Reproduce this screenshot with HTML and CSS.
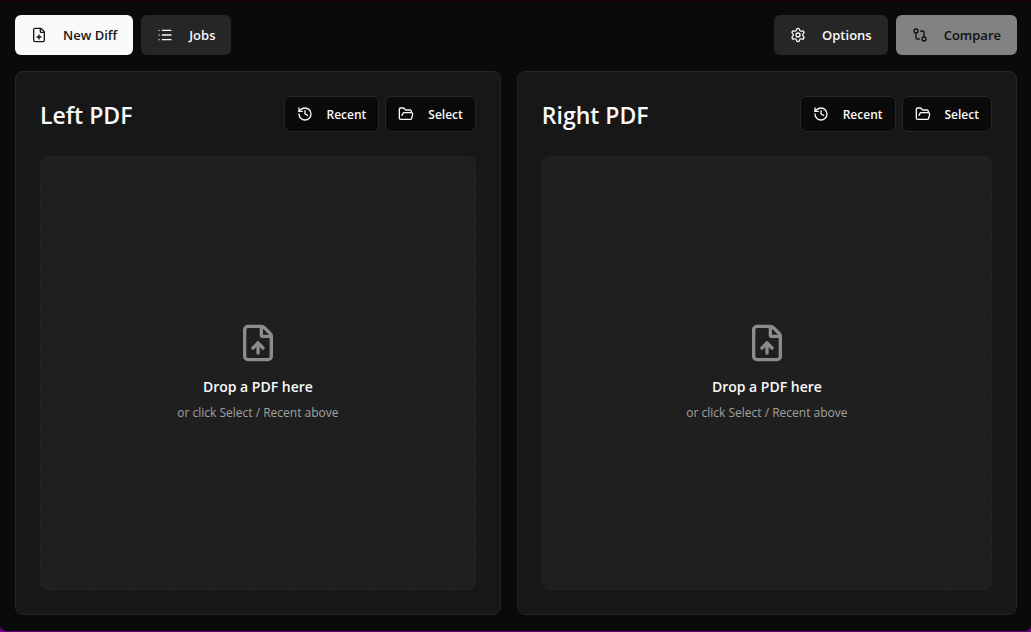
FILE: index.html
```html
<!DOCTYPE html>
<html lang="en">
<head>
<meta charset="UTF-8">
<meta name="viewport" content="width=device-width, initial-scale=1.0">
<title>PDF Diff</title>
<link rel="stylesheet" href="styles.css">
</head>
<body>

<div class="window">
    <header class="toolbar">
        <div class="toolbar-group">
            <button type="button" class="btn btn-primary">
                <svg class="icon" viewBox="0 0 24 24"><path d="M6 22a2 2 0 0 1-2-2V4a2 2 0 0 1 2-2h8a2.4 2.4 0 0 1 1.704.706l3.588 3.588A2.4 2.4 0 0 1 20 8v12a2 2 0 0 1-2 2z"/><path d="M14 2v5a1 1 0 0 0 1 1h5"/><path d="M9 15h6"/><path d="M12 18v-6"/></svg>
                New Diff
            </button>
            <button type="button" class="btn btn-secondary">
                <svg class="icon" viewBox="0 0 24 24"><path d="M3 5h.01"/><path d="M3 12h.01"/><path d="M3 19h.01"/><path d="M8 5h13"/><path d="M8 12h13"/><path d="M8 19h13"/></svg>
                Jobs
            </button>
        </div>
        <div class="toolbar-group">
            <button type="button" class="btn btn-secondary">
                <svg class="icon" viewBox="0 0 24 24"><path d="M9.671 4.136a2.34 2.34 0 0 1 4.659 0 2.34 2.34 0 0 0 3.319 1.915 2.34 2.34 0 0 1 2.33 4.033 2.34 2.34 0 0 0 0 3.831 2.34 2.34 0 0 1-2.33 4.033 2.34 2.34 0 0 0-3.319 1.915 2.34 2.34 0 0 1-4.659 0 2.34 2.34 0 0 0-3.32-1.915 2.34 2.34 0 0 1-2.33-4.033 2.34 2.34 0 0 0 0-3.831A2.34 2.34 0 0 1 6.35 6.051a2.34 2.34 0 0 0 3.319-1.915"/><circle cx="12" cy="12" r="3"/></svg>
                Options
            </button>
            <button type="button" class="btn btn-primary" disabled>
                <svg class="icon" viewBox="0 0 24 24"><circle cx="18" cy="18" r="3"/><circle cx="6" cy="6" r="3"/><path d="M13 6h3a2 2 0 0 1 2 2v7"/><path d="M11 18H8a2 2 0 0 1-2-2V9"/></svg>
                Compare
            </button>
        </div>
    </header>

    <main class="panels">
        <section class="panel">
            <div class="panel-header">
                <h2>Left PDF</h2>
                <div class="panel-actions">
                    <button type="button" class="btn btn-outline">
                        <svg class="icon" viewBox="0 0 24 24"><path d="M3 12a9 9 0 1 0 9-9 9.75 9.75 0 0 0-6.74 2.74L3 8"/><path d="M3 3v5h5"/><path d="M12 7v5l4 2"/></svg>
                        Recent
                    </button>
                    <button type="button" class="btn btn-outline">
                        <svg class="icon" viewBox="0 0 24 24"><path d="m6 14 1.5-2.9A2 2 0 0 1 9.24 10H20a2 2 0 0 1 1.94 2.5l-1.54 6a2 2 0 0 1-1.95 1.5H4a2 2 0 0 1-2-2V5a2 2 0 0 1 2-2h3.9a2 2 0 0 1 1.69.9l.81 1.2a2 2 0 0 0 1.67.9H18a2 2 0 0 1 2 2v2"/></svg>
                        Select
                    </button>
                </div>
            </div>
            <div class="dropzone">
                <svg class="drop-icon" viewBox="0 0 24 24"><path d="M6 22a2 2 0 0 1-2-2V4a2 2 0 0 1 2-2h8a2.4 2.4 0 0 1 1.704.706l3.588 3.588A2.4 2.4 0 0 1 20 8v12a2 2 0 0 1-2 2z"/><path d="M14 2v5a1 1 0 0 0 1 1h5"/><path d="M12 12v6"/><path d="m15 15-3-3-3 3"/></svg>
                <p class="drop-title">Drop a PDF here</p>
                <p class="drop-hint">or click Select / Recent above</p>
            </div>
        </section>

        <section class="panel">
            <div class="panel-header">
                <h2>Right PDF</h2>
                <div class="panel-actions">
                    <button type="button" class="btn btn-outline">
                        <svg class="icon" viewBox="0 0 24 24"><path d="M3 12a9 9 0 1 0 9-9 9.75 9.75 0 0 0-6.74 2.74L3 8"/><path d="M3 3v5h5"/><path d="M12 7v5l4 2"/></svg>
                        Recent
                    </button>
                    <button type="button" class="btn btn-outline">
                        <svg class="icon" viewBox="0 0 24 24"><path d="m6 14 1.5-2.9A2 2 0 0 1 9.24 10H20a2 2 0 0 1 1.94 2.5l-1.54 6a2 2 0 0 1-1.95 1.5H4a2 2 0 0 1-2-2V5a2 2 0 0 1 2-2h3.9a2 2 0 0 1 1.69.9l.81 1.2a2 2 0 0 0 1.67.9H18a2 2 0 0 1 2 2v2"/></svg>
                        Select
                    </button>
                </div>
            </div>
            <div class="dropzone">
                <svg class="drop-icon" viewBox="0 0 24 24"><path d="M6 22a2 2 0 0 1-2-2V4a2 2 0 0 1 2-2h8a2.4 2.4 0 0 1 1.704.706l3.588 3.588A2.4 2.4 0 0 1 20 8v12a2 2 0 0 1-2 2z"/><path d="M14 2v5a1 1 0 0 0 1 1h5"/><path d="M12 12v6"/><path d="m15 15-3-3-3 3"/></svg>
                <p class="drop-title">Drop a PDF here</p>
                <p class="drop-hint">or click Select / Recent above</p>
            </div>
        </section>
    </main>
</div>

</body>
</html>
```

FILE: styles.css
```css
* {
    box-sizing: border-box;
}

body {
    margin: 0;
    background-color: #6a0080;
    color: #fafafa;
    font-family: "Segoe UI", "Open Sans", "Noto Sans", sans-serif;
    font-size: 14px;
}

h2,
p {
    margin: 0;
}

.window {
    display: flex;
    flex-direction: column;
    gap: 16px;
    min-height: 100vh;
    padding: 14px 14px 16px 15px;
    border-top: 1px solid #1c0010;
    border-bottom: 1px solid #6a0080;
    border-radius: 0 0 6px 6px;
    background-color: #0a0a0a;
}

.toolbar,
.toolbar-group {
    display: flex;
    gap: 8px;
}

.toolbar {
    justify-content: space-between;
}

/* Buttons */
.btn {
    display: flex;
    align-items: center;
    gap: 16px;
    height: 40px;
    padding: 0 16px;
    border: none;
    border-radius: 6px;
    color: #fafafa;
    font-family: inherit;
    font-size: 13px;
    font-weight: 600;
    white-space: nowrap;
    cursor: pointer;
}

.btn-primary {
    background-color: #fafafa;
    color: #171717;
}

.btn-secondary {
    background-color: #262626;
}

.btn-outline {
    gap: 14px;
    height: 36px;
    padding: 0 12px;
    border: 1px solid #262626;
    background-color: #0a0a0a;
    font-size: 12px;
}

.btn:disabled {
    opacity: 0.5;
    cursor: default;
}

.icon,
.drop-icon {
    flex: none;
    width: 16px;
    height: 16px;
    fill: none;
    stroke: currentColor;
    stroke-width: 2;
    stroke-linecap: round;
    stroke-linejoin: round;
}

/* Panels */
.panels {
    display: flex;
    flex: 1;
    gap: 16px;
}

.panel {
    display: flex;
    flex: 1 1 auto;
    flex-direction: column;
    gap: 24px;
    padding: 24px;
    border: 1px solid #262626;
    border-radius: 8px;
    background-color: #171717;
}

.panel-header {
    display: flex;
    align-items: flex-end;
    justify-content: space-between;
}

.panel-header h2 {
    font-size: 23px;
    font-weight: 600;
    line-height: 34px;
}

.panel-actions {
    display: flex;
    gap: 6px;
}

.dropzone {
    display: flex;
    flex: 1;
    flex-direction: column;
    align-items: center;
    justify-content: center;
    border: 1px dashed #262626;
    border-radius: 8px;
    background-color: #1f1f1f;
}

.drop-icon {
    width: 40px;
    height: 40px;
    margin-bottom: 12px;
    color: #8c8c8c;
}

.drop-title {
    font-size: 14px;
    font-weight: 600;
    line-height: 24px;
}

.drop-hint {
    margin-top: 4px;
    color: #a1a1a1;
    font-size: 12px;
    line-height: 20px;
}
```
